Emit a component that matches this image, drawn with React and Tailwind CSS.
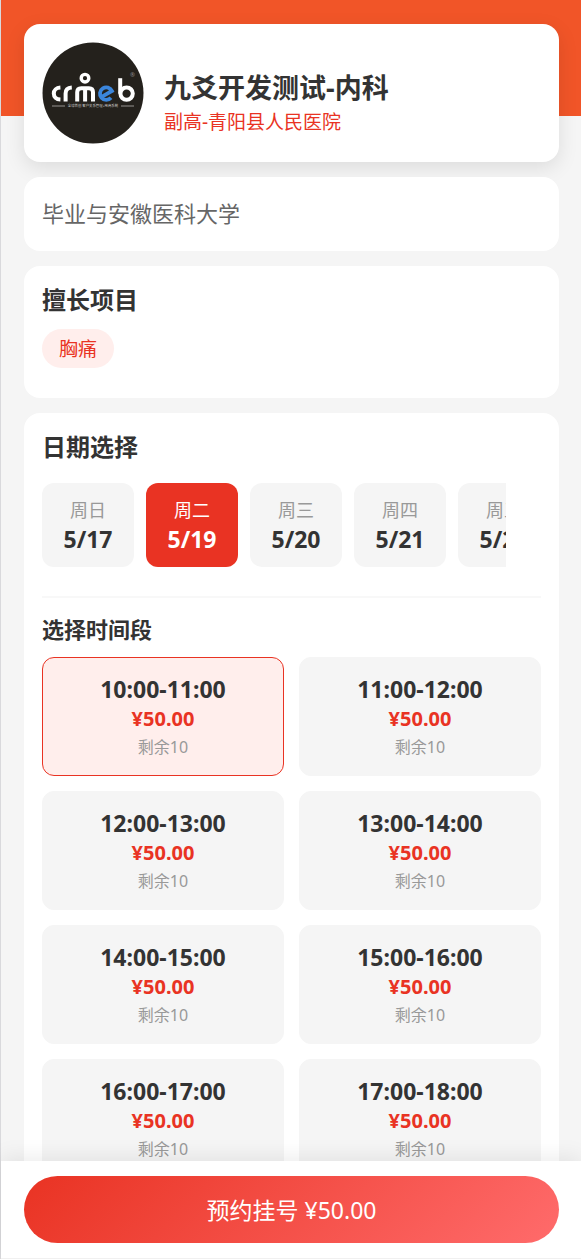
import React, { useState } from 'react';

const days = [
    { week: '周日', date: '5/17' },
    { week: '周二', date: '5/19' },
    { week: '周三', date: '5/20' },
    { week: '周四', date: '5/21' },
    { week: '周五', date: '5/22' },
];

const slots = [
    { time: '10:00-11:00', price: '50.00', left: 10 },
    { time: '11:00-12:00', price: '50.00', left: 10 },
    { time: '12:00-13:00', price: '50.00', left: 10 },
    { time: '13:00-14:00', price: '50.00', left: 10 },
    { time: '14:00-15:00', price: '50.00', left: 10 },
    { time: '15:00-16:00', price: '50.00', left: 10 },
    { time: '16:00-17:00', price: '50.00', left: 10 },
    { time: '17:00-18:00', price: '50.00', left: 10 },
];

const Avatar = () => (
    <svg viewBox="0 0 102 102" className="size-[102px] shrink-0" role="img" aria-label="crmeb">
        <circle cx="51" cy="51" r="50.5" fill="#24211c" />
        <g fill="none" stroke="#fff" strokeWidth="4">
            <path d="M18.4 45.6C14.2 45.8 11.8 48.2 11.8 51.6S14.2 57.4 18.4 57.6" />
            <path d="M23.6 59.6V51.6C23.6 48 25.8 45.8 29.8 45.6" />
            <path d="M35.2 59.6V50.2Q35.2 46.2 39.2 46.2H47Q51 46.2 51 50.2V59.6M43.1 46.2V59.6" />
            <circle cx="43" cy="36.2" r="3.8" strokeWidth="3.4" />
            <path d="M78.2 36.2V51.6" />
            <circle cx="84.6" cy="51.6" r="6.2" />
        </g>
        <path d="M60.5 54.4L70 49A6.3 6.3 0 1 0 69 55.8" fill="none" stroke="#3b86dc" strokeWidth="3.8" />
        <path d="M10 64H23M79 64H92" stroke="#b5b3b0" strokeWidth="0.8" />
        <text x="51" y="65" textAnchor="middle" fontSize="3.4" fill="#c9c7c4">全球首创 客户关系管理+电商系统</text>
        <text x="90.5" y="35" textAnchor="middle" fontSize="6" fill="#8d8b88">®</text>
    </svg>
);

const DayButton = ({ day, active, onClick }) => (
    <button
        type="button"
        onClick={onClick}
        className={`w-[92px] shrink-0 rounded-xl pt-[15px] pb-[11px] text-center ${active ? 'bg-[#e93323] text-white' : 'bg-[#f5f5f5] text-[#333]'}`}
    >
        <span className={`block text-lg leading-6 ${active ? 'text-white' : 'text-[#999]'}`}>{day.week}</span>
        <span className="block text-[23px] leading-[34px] font-bold">{day.date}</span>
    </button>
);

const SlotButton = ({ slot, active, onClick }) => (
    <button
        type="button"
        onClick={onClick}
        className={`rounded-xl border pt-4 pb-[14px] text-center ${active ? 'border-[#e93323] bg-[#ffeeec]' : 'border-[#f5f5f5] bg-[#f5f5f5]'}`}
    >
        <span className="block text-[23px] leading-[30px] font-bold text-[#333]">{slot.time}</span>
        <span className="block text-xl leading-[30px] font-bold text-[#e93323]">¥{slot.price}</span>
        <span className="block text-base leading-[27px] text-[#999]">剩余{slot.left}</span>
    </button>
);

const App = () => {
    const [dayIndex, setDayIndex] = useState(1);
    const [slotIndex, setSlotIndex] = useState(0);

    return (
        <div className="flex h-screen flex-col border-l border-[#d9d9dc] bg-[#f5f5f5] font-['Noto_Sans','Noto_Sans_CJK_SC',sans-serif]">
            <main className="min-h-0 flex-1 overflow-y-auto [scrollbar-width:none]">
                <div className="h-[116px] bg-[#f15528]" />

                <div className="-mt-[92px] flex flex-col gap-[15px] pr-[22px] pb-4 pl-[23px]">
                    {/* Doctor */}
                    <section className="flex items-end gap-5 rounded-2xl bg-white p-[18px] shadow-[0_6px_20px_rgba(0,0,0,0.1)]">
                        <Avatar />
                        <div className="min-w-0 pb-[7px]">
                            <h1 className="text-[27px] leading-[38px] font-bold text-[#333]">九爻开发测试-内科</h1>
                            <p className="text-[19px] leading-[30px] text-[#e93323]">副高-青阳县人民医院</p>
                        </div>
                    </section>

                    <section className="relative rounded-2xl bg-white px-[18px] pt-[19px] pb-[21px]">
                        <p className="text-[22px] leading-[34px] text-[#666]">毕业与安徽医科大学</p>
                    </section>

                    <section className="rounded-2xl bg-white px-[18px] pt-[17px] pb-[30px]">
                        <h2 className="text-2xl leading-[34px] font-bold text-[#333]">擅长项目</h2>
                        <div className="mt-3 flex">
                            <span className="rounded-full bg-[#ffeeec] px-[17px] pt-0.5 text-[19px] leading-[37px] text-[#e93323]">胸痛</span>
                        </div>
                    </section>

                    {/* Schedule */}
                    <section className="rounded-2xl bg-white px-[18px] pt-[17px] pb-[18px]">
                        <h2 className="text-2xl leading-[34px] font-bold text-[#333]">日期选择</h2>
                        <div className="mt-[19px] mr-[35px] flex gap-3 overflow-x-auto [scrollbar-width:none]">
                            {days.map((day, index) => (
                                <DayButton key={day.date} day={day} active={index === dayIndex} onClick={() => setDayIndex(index)} />
                            ))}
                        </div>

                        <hr className="mt-[29px] border-t-2 border-[#f8f8f8]" />

                        <h3 className="mt-[15px] text-[22px] leading-8 font-bold text-[#333]">选择时间段</h3>
                        <div className="mt-3 grid grid-cols-2 gap-[15px]">
                            {slots.map((slot, index) => (
                                <SlotButton key={slot.time} slot={slot} active={index === slotIndex} onClick={() => setSlotIndex(index)} />
                            ))}
                        </div>
                    </section>
                </div>
            </main>

            <footer className="relative border-b border-[#f0f0f0] bg-white py-[15px] pr-[22px] pl-[23px] shadow-[0_-4px_20px_rgba(0,0,0,0.08)]">
                <button type="button" className="block w-full rounded-full bg-[linear-gradient(135deg,#e93323,#ff6b6b)] pt-0.5 text-[23px] leading-[65px] text-white">
                    预约挂号 ¥{slots[slotIndex].price}
                </button>
            </footer>
        </div>
    );
};

export default App;
